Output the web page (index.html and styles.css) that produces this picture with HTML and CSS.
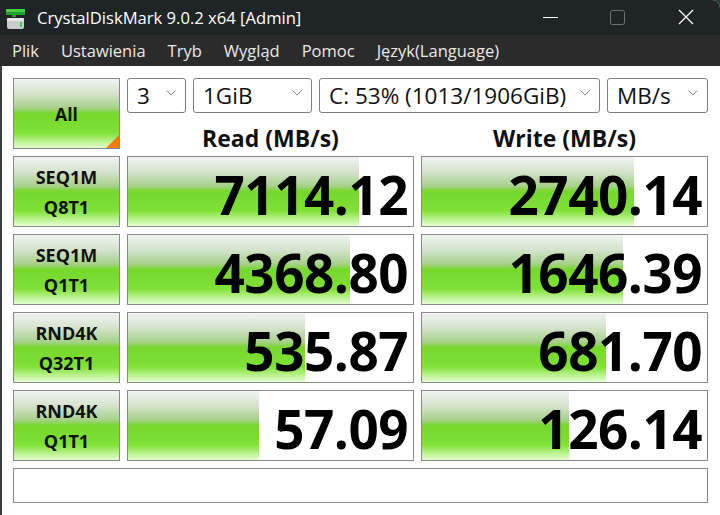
FILE: index.html
```html
<!DOCTYPE html>
<html lang="pl">
<head>
    <meta charset="UTF-8">
    <title>CrystalDiskMark 9.0.2 x64 [Admin]</title>
    <link rel="stylesheet" href="styles.css">
</head>
<body>
    <div class="window">
        <div class="titlebar">
            <svg class="app-icon" width="24" height="24" viewBox="0 0 24 24">
                <rect x="3" y="2" width="19" height="3" fill="#3fd13f"/>
                <rect x="3" y="5" width="19" height="3" fill="#1e9e2a"/>
                <rect x="9" y="8" width="4" height="2" fill="#1e9e2a"/>
                <rect x="4" y="11" width="17" height="11" rx="2" fill="#c9cccc"/>
                <rect x="4" y="11" width="17" height="3" rx="1" fill="#e6e8e8"/>
                <rect x="17" y="15" width="2" height="5" fill="#3fd13f"/>
            </svg>
            <span class="title">CrystalDiskMark 9.0.2 x64 [Admin]</span>
            <div class="controls">
                <svg width="46" height="35" viewBox="0 0 46 35"><line x1="18" y1="17.5" x2="33" y2="17.5" stroke="#fff" stroke-width="1"/></svg>
                <svg width="46" height="35" viewBox="0 0 46 35"><rect x="16.5" y="10.5" width="14" height="14" rx="2" fill="none" stroke="#6d7374" stroke-width="1"/></svg>
                <svg width="46" height="35" viewBox="0 0 46 35"><path d="M16 10 L30 24 M30 10 L16 24" stroke="#fff" stroke-width="1.2"/></svg>
            </div>
        </div>
        <div class="menubar">
            <span>Plik</span>
            <span>Ustawienia</span>
            <span>Tryb</span>
            <span>Wygląd</span>
            <span>Pomoc</span>
            <span>Język(Language)</span>
        </div>

        <div class="content">
            <div class="top">
                <button class="btn btn-all">All</button>
                <div class="top-right">
                    <div class="selects">
                        <div class="select s-count">3<svg width="10" height="6" viewBox="0 0 10 6"><polyline points="0.5,0.5 5,5 9.5,0.5" fill="none" stroke="#8a8a8a"/></svg></div>
                        <div class="select s-size">1GiB<svg width="10" height="6" viewBox="0 0 10 6"><polyline points="0.5,0.5 5,5 9.5,0.5" fill="none" stroke="#8a8a8a"/></svg></div>
                        <div class="select s-drive">C: 53% (1013/1906GiB)<svg width="10" height="6" viewBox="0 0 10 6"><polyline points="0.5,0.5 5,5 9.5,0.5" fill="none" stroke="#8a8a8a"/></svg></div>
                        <div class="select s-unit">MB/s<svg width="10" height="6" viewBox="0 0 10 6"><polyline points="0.5,0.5 5,5 9.5,0.5" fill="none" stroke="#8a8a8a"/></svg></div>
                    </div>
                    <div class="headers">
                        <div class="head">Read (MB/s)</div>
                        <div class="head">Write (MB/s)</div>
                    </div>
                </div>
            </div>

            <div class="row">
                <button class="btn btn-test">SEQ1M<br>Q8T1</button>
                <div class="cell"><div class="bar" style="width: 81.1%"></div><div class="val">7114.12</div></div>
                <div class="cell"><div class="bar" style="width: 74.4%"></div><div class="val">2740.14</div></div>
            </div>
            <div class="row">
                <button class="btn btn-test">SEQ1M<br>Q1T1</button>
                <div class="cell"><div class="bar" style="width: 78%"></div><div class="val">4368.80</div></div>
                <div class="cell"><div class="bar" style="width: 70.5%"></div><div class="val">1646.39</div></div>
            </div>
            <div class="row">
                <button class="btn btn-test">RND4K<br>Q32T1</button>
                <div class="cell"><div class="bar" style="width: 62%"></div><div class="val">535.87</div></div>
                <div class="cell"><div class="bar" style="width: 64.6%"></div><div class="val">681.70</div></div>
            </div>
            <div class="row">
                <button class="btn btn-test">RND4K<br>Q1T1</button>
                <div class="cell"><div class="bar" style="width: 46%"></div><div class="val">57.09</div></div>
                <div class="cell"><div class="bar" style="width: 51.6%"></div><div class="val">126.14</div></div>
            </div>

            <div class="comment"></div>
        </div>
    </div>
</body>
</html>
```

FILE: styles.css
```css
* {
    box-sizing: border-box;
}

body {
    margin: 0;
    padding: 0;
    width: 720px;
    height: 515px;
    overflow: hidden;
    background: #26363a;
    font-family: 'Open Sans', 'Noto Sans', sans-serif;
}

.window {
    width: 720px;
    height: 515px;
    display: flex;
    flex-direction: column;
    border-top-right-radius: 8px;
    overflow: hidden;
    background: #fff;
}

.titlebar {
    height: 35px;
    background: #1f2527;
    display: flex;
    align-items: center;
    color: #fff;
}

.app-icon {
    margin-left: 3px;
    margin-top: 2px;
}

.title {
    margin-left: 10px;
    font-size: 16.6px;
}

.controls {
    margin-left: auto;
    display: flex;
    margin-right: 11px;
}

.controls svg {
    display: block;
    margin-left: 23px;
}

.menubar {
    height: 31px;
    background: #2b2b2b;
    color: #e8e8e8;
    font-size: 16.5px;
    display: flex;
    align-items: center;
    gap: 22px;
    padding-left: 12px;
    padding-bottom: 1px;
}

.content {
    flex: 1;
    padding: 12px 12px 0 11px;
    border-left: 2px solid #3a3f40;
}

.top {
    display: grid;
    grid-template-columns: 107px 1fr;
    gap: 7px;
}

.btn {
    border: 1px solid #8a8a8a;
    font-family: 'Open Sans', 'Noto Sans', sans-serif;
    font-weight: 700;
    color: #111;
    padding: 0;
    background: linear-gradient(to bottom,
        #f1f4f1 0%, #d3e3cb 22%, #a6d18a 42%, #76d72c 50%,
        #80e236 78%, #b9f28c 90%, #e4fdd2 100%);
}

.btn-all {
    position: relative;
    height: 71px;
    font-size: 17.5px;
}

.btn-all::after {
    content: "";
    position: absolute;
    right: 0;
    bottom: 0;
    width: 0;
    height: 0;
    border-style: solid;
    border-width: 0 0 13px 13px;
    border-color: transparent transparent #ff7a00 transparent;
}

.top-right {
    display: flex;
    flex-direction: column;
}

.selects {
    display: flex;
    gap: 7px;
    height: 35px;
}

.select {
    border: 1px solid #7e7e7e;
    border-radius: 3px;
    display: flex;
    align-items: center;
    justify-content: space-between;
    padding: 0 9px 1px 9px;
    font-size: 22.5px;
    color: #111;
}

.select svg {
    margin-top: -4px;
    flex: none;
}

.s-count { width: 59px; }
.s-size { width: 119px; }
.s-drive { width: 281px; }
.s-unit { width: 101px; }

.headers {
    display: grid;
    grid-template-columns: 287px 287px;
    gap: 7px;
    height: 36px;
}

.head {
    text-align: center;
    font-size: 23px;
    font-weight: 700;
    color: #111;
    line-height: 36px;
    padding-top: 7px;
}

.row {
    display: grid;
    grid-template-columns: 107px 287px 287px;
    gap: 7px;
    height: 71px;
    margin-top: 7px;
}

.btn-test {
    font-size: 18px;
    line-height: 30px;
    padding-top: 1px;
}

.cell {
    border: 1px solid #8a8a8a;
    background: #fff;
    display: grid;
}

.bar {
    grid-area: 1 / 1;
    height: 100%;
    background: linear-gradient(to bottom,
        #f1f4f1 0%, #d3e3cb 22%, #a6d18a 42%, #76d72c 50%,
        #80e236 78%, #b9f28c 90%, #e4fdd2 100%);
}

.val {
    grid-area: 1 / 1;
    align-self: center;
    text-align: right;
    padding-right: 5px;
    padding-top: 5px;
    font-size: 53px;
    line-height: 1;
    font-weight: 700;
    color: #000;
    letter-spacing: -0.5px;
}

.comment {
    margin-top: 7px;
    height: 35px;
    border: 1px solid #8a8a8a;
}
```
